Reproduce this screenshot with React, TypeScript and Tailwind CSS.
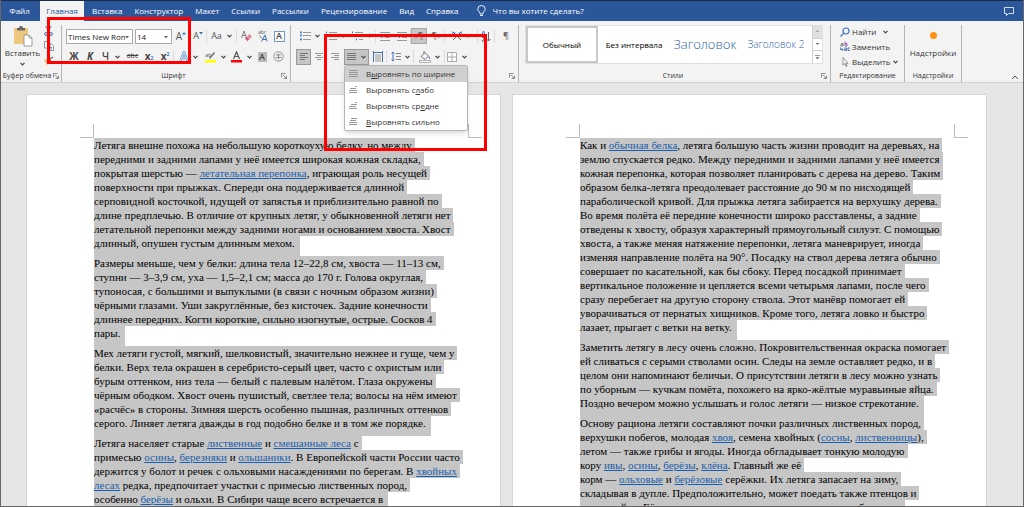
import type { ReactNode } from "react"
import clsx from "clsx"

const tabs = ["Вставка", "Конструктор", "Макет", "Ссылки", "Рассылки", "Рецензирование", "Вид", "Справка"]

function Link({ children }: { children: ReactNode }) {
  return (
    <a href="#" className="text-[#1a5fae] underline">
      {children}
    </a>
  )
}

const leftPage: ReactNode[][] = [
  [
    "Летяга внешне похожа на небольшую короткоухую белку, но между",
    "передними и задними лапами у неё имеется широкая кожная складка,",
    <>покрытая шерстью — <Link>летательная перепонка</Link>, играющая роль несущей</>,
    "поверхности при прыжках. Спереди она поддерживается длинной",
    "серповидной косточкой, идущей от запястья и приблизительно равной по",
    "длине предплечью. В отличие от крупных летяг, у обыкновенной летяги нет",
    "летательной перепонки между задними ногами и основанием хвоста. Хвост",
    "длинный, опушен густым длинным мехом.",
  ],
  [
    "Размеры меньше, чем у белки: длина тела 12–22,8 см, хвоста — 11–13 см,",
    "ступни — 3–3,9 см, уха — 1,5–2,1 см; масса до 170 г. Голова округлая,",
    "тупоносая, с большими и выпуклыми (в связи с ночным образом жизни)",
    "чёрными глазами. Уши закруглённые, без кисточек. Задние конечности",
    "длиннее передних. Когти короткие, сильно изогнутые, острые. Сосков 4",
    "пары.",
  ],
  [
    "Мех летяги густой, мягкий, шелковистый, значительно нежнее и гуще, чем у",
    "белки. Верх тела окрашен в серебристо-серый цвет, часто с охристым или",
    "бурым оттенком, низ тела — белый с палевым налётом. Глаза окружены",
    "чёрным ободком. Хвост очень пушистый, светлее тела; волосы на нём имеют",
    "«расчёс» в стороны. Зимняя шерсть особенно пышная, различных оттенков",
    "серого. Линяет летяга дважды в год подобно белке и в том же порядке.",
  ],
  [
    <>Летяга населяет старые <Link>лиственные</Link> и <Link>смешанные леса</Link> с</>,
    <>примесью <Link>осины</Link>, <Link>березняки</Link> и <Link>ольшаники</Link>. В Европейской части России часто</>,
    <>держится у болот и речек с ольховыми насаждениями по берегам. В <Link>хвойных</Link></>,
    <><Link>лесах</Link> редка, предпочитает участки с примесью лиственных пород,</>,
    <>особенно <Link>берёзы</Link> и ольхи. В Сибири чаще всего встречается в</>,
  ],
]

const rightPage: ReactNode[][] = [
  [
    <>Как и <Link>обычная белка</Link>, летяга большую часть жизни проводит на деревьях, на</>,
    "землю спускается редко. Между передними и задними лапами у неё имеется",
    "кожная перепонка, которая позволяет планировать с дерева на дерево. Таким",
    "образом белка-летяга преодолевает расстояние до 90 м по нисходящей",
    "параболической кривой. Для прыжка летяга забирается на верхушку дерева.",
    "Во время полёта её передние конечности широко расставлены, а задние",
    "отведены к хвосту, образуя характерный прямоугольный силуэт. С помощью",
    "хвоста, а также меняя натяжение перепонки, летяга маневрирует, иногда",
    "изменяя направление полёта на 90°. Посадку на ствол дерева летяга обычно",
    "совершает по касательной, как бы сбоку. Перед посадкой принимает",
    "вертикальное положение и цепляется всеми четырьмя лапами, после чего",
    "сразу перебегает на другую сторону ствола. Этот манёвр помогает ей",
    "уворачиваться от пернатых хищников. Кроме того, летяга ловко и быстро",
    "лазает, прыгает с ветки на ветку.",
  ],
  [
    "Заметить летягу в лесу очень сложно. Покровительственная окраска помогает",
    "ей сливаться с серыми стволами осин. Следы на земле оставляет редко, и в",
    "целом они напоминают беличьи. О присутствии летяги в лесу можно узнать",
    "по уборным — кучкам помёта, похожего на ярко-жёлтые муравьиные яйца.",
    "Поздно вечером можно услышать и голос летяги — низкое стрекотание.",
  ],
  [
    "Основу рациона летяги составляют почки различных лиственных пород,",
    <>верхушки побегов, молодая <Link>хвоя</Link>, семена хвойных (<Link>сосны</Link>, <Link>лиственницы</Link>),</>,
    "летом — также грибы и ягоды. Иногда обгладывает тонкую молодую",
    <>кору <Link>ивы</Link>, <Link>осины</Link>, <Link>берёзы</Link>, <Link>клёна</Link>. Главный же её</>,
    <>корм — <Link>ольховые</Link> и <Link>берёзовые</Link> серёжки. Их летяга запасает на зиму,</>,
    "складывая в дупле. Предположительно, может поедать также птенцов и",
    "птичьи яйца. Её рацион варьирует в зависимости от местообитания.",
  ],
]

function Page({ paragraphs }: { paragraphs: ReactNode[][] }) {
  return (
    <article className="min-w-0 flex-1 overflow-hidden border border-b-0 border-[#d6d6d6] bg-white pt-[29px]">
      {/* margin corners */}
      <div className="flex h-[14px] justify-between pr-[18px] pl-[53px]">
        <span className="w-[14px] border-r border-b border-[#bdbdbd]" />
        <span className="w-[14px] border-b border-l border-[#bdbdbd]" />
      </div>
      <div className="pl-[67px] font-['Liberation_Serif',serif] text-[11px] leading-[14px] whitespace-pre text-black">
        {paragraphs.map((lines, p) => (
          <p key={p}>
            {lines.map((line, i) => {
              const last = i === lines.length - 1
              return (
                <span key={i} className={clsx("block w-fit bg-[#c6c6c6]", last ? "pr-[5px] pb-[6px]" : "pr-[3px]")}>
                  {line}
                </span>
              )
            })}
          </p>
        ))}
      </div>
    </article>
  )
}

function Chevron() {
  return (
    <svg width="5" height="4" viewBox="0 0 5 4" className="shrink-0" fill="none" stroke="#444" strokeWidth="1.200">
      <path d="M.5 .8 2.5 2.8 4.5 .8" />
    </svg>
  )
}

function Caret() {
  return (
    <svg width="4" height="3" viewBox="0 0 4 3" className="pointer-events-none absolute top-[6px] right-[3px]" fill="#666">
      <path d="M0 0h4L2 2.5z" />
    </svg>
  )
}

function Launcher() {
  return (
    <button aria-label="Параметры" className="shrink-0">
      <svg width="6" height="6" viewBox="0 0 6 6" fill="none" stroke="#666" strokeWidth=".8">
        <path d="M.4 4.5V.4h4.2M2 2l3.4 3.4M5.6 2.6v3H2.6" />
      </svg>
    </button>
  )
}

function Divider() {
  return <span className="h-[13px] w-px shrink-0 bg-[#dcdcdc]" />
}

function Tool({ label, className, children }: { label: string; className: string; children: ReactNode }) {
  return (
    <button aria-label={label} className={clsx("flex h-4 shrink-0 items-center justify-center", className)}>
      {children}
    </button>
  )
}

// horizontal bars icon, each bar is [x, y, width]
function Bars({ bars, color = "#999" }: { bars: number[][]; color?: string }) {
  return (
    <svg width="10" height="10" viewBox="0 0 10 10" fill={color} className="shrink-0">
      {bars.map(([x, y, w]) => (
        <rect key={`${x}-${y}`} x={x} y={y} width={w} height="1" />
      ))}
    </svg>
  )
}

function ListIcon({ kind }: { kind: "bullets" | "numbers" | "levels" }) {
  const shift = kind === "levels" ? [0, 2, 4] : [0, 0, 0]
  return (
    <svg width="11" height="10" viewBox="0 0 11 10" className="shrink-0">
      {[1, 4, 8].map((y, i) => (
        <g key={y}>
          <rect x={shift[i]} y={y - 0.5} width={kind === "bullets" ? 1.8 : 1} height="1.8" fill="#3f73b5" />
          <rect x={3 + shift[i]} y={y} width={8 - shift[i]} height="1" fill="#999" />
        </g>
      ))}
    </svg>
  )
}

function IndentIcon({ back }: { back?: boolean }) {
  return (
    <svg width="10" height="9" viewBox="0 0 10 9" className="shrink-0" fill="none" stroke="#999">
      <path d="M0 .5h10M5 3.5h5M5 5.5h5M0 8.5h10" />
      <path d={back ? "M4 4.5H.5M2 3 .5 4.5 2 6" : "M0 4.5h3.5M2 3l1.5 1.5L2 6"} stroke="#3f73b5" strokeWidth=".9" />
    </svg>
  )
}

function Group({ title, launcher, className, children }: { title?: string; launcher?: boolean; className: string; children: ReactNode }) {
  return (
    <section className={clsx("flex flex-col border-r border-[#b4b4b4]", className)}>
      <div className="h-[46px]">{children}</div>
      <div className="flex h-3 items-center text-[7px] leading-3 text-[#333]">
        <span className="flex-1 text-center whitespace-nowrap">{title}</span>
        {launcher && <Launcher />}
      </div>
    </section>
  )
}

function ClipboardGroup() {
  return (
    <Group title="Буфер обмена" launcher className="w-[61px] pr-[2px]">
      <div className="flex">
        <button className="flex w-[43px] flex-col items-center text-[8px] leading-[10px] text-[#333]">
          <svg width="20" height="22" viewBox="0 0 20 22">
            <path d="M1 3h14v16H1z" fill="#edc87e" />
            <path d="M4 3h2a2 2 0 0 1 4 0h2v2.500H4z" fill="#666" />
            <path d="M11 10h5l3 3v8h-8z" fill="#fff" stroke="#888" strokeWidth=".8" />
            <path d="M16 10v3h3" fill="none" stroke="#888" strokeWidth=".8" />
          </svg>
          <span className="pt-px">Вставить</span>
          <span className="flex h-2 items-end"><Chevron /></span>
        </button>
        <div className="flex flex-col gap-[5px] pt-px">
          <button aria-label="Вырезать">
            <svg width="9" height="10" viewBox="0 0 9 10" fill="none" stroke="#777" strokeWidth="1">
              <path d="M1.5 0 6 7M7.500 0 3 7" />
              <circle cx="2" cy="8" r="1.400" stroke="#3f73b5" />
              <circle cx="7" cy="8" r="1.400" stroke="#3f73b5" />
            </svg>
          </button>
          <button aria-label="Копировать">
            <svg width="10" height="10" viewBox="0 0 10 10" fill="#fff" stroke="#888" strokeWidth=".9">
              <path d="M.5.5h4l1.500 1.500v5H.5zM4 3h3.500L9.500 5v4.500H4z" />
              <path d="M5 6.500h3M5 8h3" stroke="#3f73b5" />
            </svg>
          </button>
          <button aria-label="Формат по образцу">
            <svg width="10" height="9" viewBox="0 0 10 9">
              <path d="M0 4l4-1 2 3-3 3z" fill="#edb35a" />
              <path d="M5 3.500 9 1M5 3l2.500 3" stroke="#666" strokeWidth="1.200" />
            </svg>
          </button>
        </div>
      </div>
    </Group>
  )
}

function FontGroup() {
  return (
    <Group title="Шрифт" launcher className="w-[229px] pr-[3px] pl-1">
      <div className="flex h-[21px] items-center pt-px">
        <div className="relative mr-[2px] h-[15px] w-[67px] border border-[#ababab] bg-white">
          <select aria-label="Шрифт" className="block h-[13px] w-[58px] appearance-none overflow-hidden pl-px text-[8px] leading-[13px] text-[#222]">
            <option>Times New Roman</option>
          </select>
          <Caret />
        </div>
        <div className="relative h-[15px] w-[37px] border border-[#ababab] bg-white">
          <select aria-label="Размер шрифта" className="block h-[13px] w-[28px] appearance-none pl-px text-[8px] leading-[13px] text-[#222]">
            <option>14</option>
          </select>
          <Caret />
        </div>
        <Tool label="Увеличить размер" className="w-[18px] text-[10px] text-[#555]">
          A<svg width="4" height="8" viewBox="0 0 4 8" fill="#3f73b5"><path d="M0 2.500 2 0l2 2.500z" /></svg>
        </Tool>
        <Tool label="Уменьшить размер" className="w-4 text-[9px] text-[#555]">
          A<svg width="4" height="8" viewBox="0 0 4 8" fill="#3f73b5"><path d="M0 0h4L2 2.500z" /></svg>
        </Tool>
        <Divider />
        <Tool label="Регистр" className="w-[29px] gap-[5px] text-[9px] text-[#555]">
          Aa<Chevron />
        </Tool>
        <Divider />
        <Tool label="Очистить формат" className="w-[18px]">
          <svg width="11" height="12" viewBox="0 0 11 12">
            <path d="M.5 8 3 1l2.500 7M1.400 5.500h3.200" fill="none" stroke="#777" strokeWidth=".9" />
            <path d="M4 8.500 8.500 4 11 6.500 6.500 11z" fill="#e68a9e" />
            <path d="M4 8.500 5.500 7 8 9.500 6.500 11z" fill="#c75b78" />
          </svg>
        </Tool>
        <Tool label="Фонетика" className="w-4">
          <svg width="10" height="12" viewBox="0 0 10 12" fontSize="5">
            <text x="0" y="4" fill="#555">abc</text>
            <path d="M3.500 11.500 7 5l2 6.500M5 9.500h3" fill="none" stroke="#3f73b5" />
            <path d="M1.500 5.500 4 8.500" stroke="#777" />
          </svg>
        </Tool>
        <Tool label="Граница знаков" className="w-4">
          <span className="flex size-[11px] items-center justify-center border border-[#6f9ccf] bg-white text-[9px] font-semibold text-[#444]">A</span>
        </Tool>
      </div>
      <div className="flex h-[21px] items-center text-[10px] text-[#444]">
        <Tool label="Полужирный" className="w-4 font-bold">Ж</Tool>
        <Tool label="Курсив" className="w-4 font-bold italic">К</Tool>
        <Tool label="Подчеркнутый" className="w-[26px] gap-[6px] font-semibold"><span className="underline">Ч</span><Chevron /></Tool>
        <Tool label="Зачеркнутый" className="w-[17px] text-[7px]"><s>abc</s></Tool>
        <Tool label="Подстрочный" className="w-4 font-bold">x<sub className="text-[5px] text-[#3f73b5]">2</sub></Tool>
        <Tool label="Надстрочный" className="w-4 font-bold">x<sup className="text-[5px] text-[#3f73b5]">2</sup></Tool>
        <Divider />
        <Tool label="Эффекты" className="w-[28px] gap-[4px]">
          <svg width="10" height="11" viewBox="0 0 9 11" fill="none" strokeLinejoin="round">
            <path d="M1 10 4.500 1 8 10M2.500 7h4" stroke="#5b93d0" strokeWidth="2.400" />
            <path d="M1 10 4.500 1 8 10M2.500 7h4" stroke="#fff" strokeWidth=".8" />
          </svg>
          <Chevron />
        </Tool>
        <Tool label="Цвет выделения" className="w-[26px] gap-[5px]">
          <svg width="11" height="12" viewBox="0 0 11 12">
            <text x="0" y="6" fontSize="6" fill="#555">ab</text>
            <path d="M4.500 7.500 9.500 1.500" stroke="#777" strokeWidth="1.500" />
            <path d="M0 9h11v2.500H0z" fill="#ff0" />
          </svg>
          <Chevron />
        </Tool>
        <Tool label="Цвет текста" className="w-[26px] gap-[5px]">
          <svg width="11" height="12" viewBox="0 0 11 12">
            <path d="M2.500 8 5.500.8 8.500 8M3.500 5.500h4" fill="none" stroke="#555" strokeWidth="1.200" />
            <path d="M0 9h11v2.500H0z" fill="#f00" />
          </svg>
          <Chevron />
        </Tool>
        <Tool label="Затенение знаков" className="w-4"><span className="flex h-[10px] w-[9px] items-center justify-center bg-[#bbb] text-[9px] font-semibold">A</span></Tool>
        <Tool label="Обводка знаков" className="w-4">
          <svg width="11" height="11" viewBox="0 0 11 11" fill="none" stroke="#777" strokeWidth=".8">
            <circle cx="5.500" cy="5.500" r="4.700" />
            <path d="M3 4h5M2.500 6.500h6M5.500 2.500v6" />
          </svg>
        </Tool>
      </div>
    </Group>
  )
}

const alignOptions = [
  { before: "В", key: "ы", after: "ровнять по ширине", bars: [[0, 1, 9], [0, 3, 9], [0, 5, 9], [0, 7, 9]] },
  { before: "Выровнять с", key: "л", after: "або", bars: [[6, 1, 2], [1, 3, 6], [0, 5, 8], [0, 7, 8]] },
  { before: "Выровнять ср", key: "е", after: "дне", bars: [[6, 1, 2], [2, 3, 6], [0, 5, 7], [0, 7, 8]] },
  { before: "", key: "В", after: "ыровнять сильно", bars: [[2, 1, 6], [1, 3, 6], [0, 5, 8], [0, 7, 8]] },
]

function AlignMenu() {
  return (
    <div role="menu" className="absolute top-4 left-0 z-20 w-[124px] rounded-[2px] border border-[#b5b5b5] bg-white shadow-md">
      {alignOptions.map((option, i) => (
        <button
          key={option.key + i}
          role="menuitem"
          className={clsx("flex h-4 w-full items-center gap-[7px] pl-1 text-[8px] whitespace-nowrap text-[#333]", i === 0 && "bg-[#cfcfcf]")}
        >
          <Bars bars={option.bars} />
          <span>
            {option.before}
            <u>{option.key}</u>
            {option.after}
          </span>
        </button>
      ))}
    </div>
  )
}

function ParagraphGroup() {
  return (
    <Group launcher className="w-[228px] pr-[3px] pl-[5px]">
      <div className="flex h-[21px] items-center pt-px">
        <Tool label="Маркеры" className="w-[27px] gap-[4px]"><ListIcon kind="bullets" /><Chevron /></Tool>
        <Tool label="Нумерация" className="w-[26px] gap-[4px]"><ListIcon kind="numbers" /><Chevron /></Tool>
        <Tool label="Многоуровневый список" className="w-[26px] gap-[4px]"><ListIcon kind="levels" /><Chevron /></Tool>
        <Divider />
        <Tool label="Уменьшить отступ" className="w-[18px]"><IndentIcon back /></Tool>
        <Tool label="Увеличить отступ" className="w-4"><IndentIcon /></Tool>
        <Divider />
        <Tool label="Слева направо" className="w-4 border border-[#aaa] bg-[#c6c6c6] text-[9px] text-[#666]"><span className="text-[#3f73b5]">›</span>¶</Tool>
        <Tool label="Справа налево" className="w-[17px] text-[9px] text-[#666]">¶<span className="text-[#3f73b5]">‹</span></Tool>
        <Divider />
        <Tool label="Азиатская верстка" className="w-[32px] gap-[4px]">
          <svg width="10" height="10" viewBox="0 0 10 10" fill="none">
            <path d="M1 9 5 5l4 4M5 5 1.500 1.500M5 5l3.500-3.500" stroke="#666" />
            <path d="M0 0v4M10 0v4M.5 2h3M9.500 2h-3" stroke="#3f73b5" />
          </svg>
          <Chevron />
        </Tool>
        <Divider />
        <Tool label="Сортировка" className="w-4">
          <svg width="10" height="12" viewBox="0 0 10 12" fill="none">
            <path d="M.5 6 2.500 1l2 5M1 4.500h3" stroke="#3f73b5" />
            <path d="M1 7.500h3L1 11h3" stroke="#666" />
            <path d="M7.500 2v9M5.500 9l2 2 2-2" stroke="#666" />
          </svg>
        </Tool>
        <Divider />
        <Tool label="Отобразить все знаки" className="w-[22px] text-[9px] text-[#666]">¶</Tool>
      </div>
      <div className="flex h-[21px] items-center">
        <Tool label="По левому краю" className="w-[15px] border border-[#999] bg-[#c6c6c6]"><Bars bars={[[1, 1, 8], [1, 3, 5], [1, 5, 8], [1, 7, 5]]} color="#777" /></Tool>
        <Tool label="По центру" className="w-4"><Bars bars={[[1, 1, 8], [3, 3, 4], [1, 5, 8], [3, 7, 4]]} /></Tool>
        <Tool label="По правому краю" className="w-4"><Bars bars={[[1, 1, 8], [4, 3, 5], [1, 5, 8], [4, 7, 5]]} /></Tool>
        <div className="relative ml-px">
          <Tool label="По ширине" className="w-[25px] gap-[4px] border border-[#999] bg-[#c6c6c6]">
            <Bars bars={[[0, 1, 9], [0, 3, 9], [0, 5, 9], [0, 7, 9]]} color="#777" /><Chevron />
          </Tool>
          <AlignMenu />
        </div>
        <Tool label="Распределить" className="w-[17px]">
          <svg width="10" height="11" viewBox="0 0 10 11">
            <path d="M.5 0v11M9.500 0v11M1 1.500h8" stroke="#3f73b5" />
            <path d="M2 4h6M2 6h6M2 8h6M2 10h6" stroke="#999" />
          </svg>
        </Tool>
        <Divider />
        <Tool label="Интервал" className="w-[26px] gap-[4px]">
          <svg width="10" height="11" viewBox="0 0 10 11" fill="none">
            <path d="M2 1v9M.5 2.500 2 1l1.500 1.500M.5 8.500 2 10l1.500-1.500" stroke="#3f73b5" />
            <path d="M5 2.500h5M5 5.500h5M5 8.500h5" stroke="#888" />
          </svg>
          <Chevron />
        </Tool>
        <Divider />
        <Tool label="Заливка" className="w-[30px] gap-[4px]">
          <svg width="12" height="12" viewBox="0 0 12 12" fill="none">
            <path d="M2 5.500 6 1.500 9.500 5 6 8.500zM5 0v3" stroke="#777" />
            <path d="M10 5c1.500 2 1 3 .5 3s-1-1-.5-3z" fill="#3f73b5" />
            <rect x=".5" y="9.500" width="11" height="2" fill="#fff" stroke="#999" strokeWidth=".7" />
          </svg>
          <Chevron />
        </Tool>
        <Divider />
        <Tool label="Границы" className="w-[24px] gap-[5px]">
          <svg width="10" height="10" viewBox="0 0 10 10" fill="#fff" stroke="#aaa">
            <path d="M.5.5h9v9h-9zM5 .5v9M.5 5h9" />
          </svg>
          <Chevron />
        </Tool>
      </div>
    </Group>
  )
}

function StylesGroup() {
  return (
    <Group title="Стили" launcher className="min-w-0 flex-1 pr-[3px] pl-[6px]">
      <div className="mr-1 flex h-[39px] border border-[#e0e0e0] bg-white whitespace-nowrap">
        <button className="w-[72px] border-2 border-[#c8c9c4] text-[8px] font-medium text-black">Обычный</button>
        <button className="w-[72px] text-[8px] font-medium text-black">Без интервала</button>
        <button className="w-[70px] text-[13px] font-light text-[#2f5fa6]">Заголовок</button>
        <button className="flex-1 text-[10px] font-light text-[#2f5fa6]">Заголовок 2</button>
        <div className="flex w-[10px] flex-col border-l border-[#d0d0d0]">
          {["Вверх", "Вниз", "Ещё"].map((name, i) => (
            <button key={name} aria-label={name} className={clsx("flex flex-1 items-center justify-center", i === 0 ? "bg-[#e1e1e1]" : "border-t border-[#d0d0d0]")}>
              <svg width="5" height="5" viewBox="0 0 5 5" fill={i === 0 ? "#aaa" : "#777"}>
                <path d={i === 0 ? "M.5 3h4l-2-2z" : i === 1 ? "M.5 1h4l-2 2z" : "M.5 2h4l-2 2.500zM0 0h5v.8H0z"} />
              </svg>
            </button>
          ))}
        </div>
      </div>
    </Group>
  )
}

function EditGroup() {
  return (
    <Group title="Редактирование" className="w-[74px]">
      <div className="flex flex-col gap-[2px] pl-[9px] text-[8px] text-[#333]">
        <button className="flex h-[13px] items-center gap-[2px]">
          <svg width="10" height="10" viewBox="0 0 10 10" fill="none" stroke="#3f73b5" strokeWidth="1.200">
            <circle cx="6" cy="4" r="3" />
            <path d="M3.800 6.200.5 9.500" />
          </svg>
          Найти
          <span className="pl-[5px]"><Chevron /></span>
        </button>
        <button className="flex h-[13px] items-center gap-[2px]">
          <svg width="10" height="11" viewBox="0 0 10 11" fill="none" strokeWidth=".9">
            <path d="M1 2.500h2v2.500H1.200a.7.7 0 0 1 0-1.400H3" stroke="#777" />
            <path d="M5 .5v4.500h2V2.500H5" stroke="#8a4fa5" />
            <path d="M4.500 7h2v2.500H4.700a.7.7 0 0 1 0-1.300h1.800M9.800 7H8v2.500h1.800M.5 6.500v2h2.500M2 7.300l1.200 1.200L2 9.700" stroke="#3f73b5" />
          </svg>
          Заменить
        </button>
        <button className="flex h-[13px] items-center gap-[2px]">
          <svg width="10" height="10" viewBox="0 0 10 10" fill="#fff" stroke="#777" strokeWidth=".8">
            <path d="M3 .5v7.500L4.800 6.500l1.200 3 1-.5-1.200-2.700H8z" />
          </svg>
          Выделить
          <Chevron />
        </button>
      </div>
    </Group>
  )
}

export default function App() {
  return (
    <div className="relative flex h-screen flex-col overflow-hidden border-x border-b border-[#666] bg-[#e6e6e6] font-['Open_Sans',sans-serif]">
      <nav className="flex h-[21px] shrink-0 items-stretch gap-[2px] border-t border-[#1a2b4a] bg-[#2b579a] text-[8px] whitespace-nowrap text-white">
        <button className="w-[37px]">Файл</button>
        <button className="mr-px w-[44px] bg-[#f3f3f3] text-[#2b579a]">Главная</button>
        {tabs.map((tab) => (
          <button key={tab} className="px-[5px]">{tab}</button>
        ))}
        <label className="flex items-center gap-[7px] pl-[11px]">
          <svg width="9" height="12" viewBox="0 0 9 12" fill="none" stroke="#fff" strokeWidth=".9">
            <path d="M3 9V7.500C1.500 6.500.8 5.500.8 4.200a3.700 3.700 0 0 1 7.400 0C8.200 5.500 7.500 6.500 6 7.500V9zM3 10.500h3" />
          </svg>
          <input aria-label="Поиск команд" className="w-[120px] bg-transparent placeholder:text-white" placeholder="Что вы хотите сделать?" />
        </label>
        <button aria-label="Примечания" className="ml-auto pr-[9px]">
          <svg width="10" height="9" viewBox="0 0 10 9" fill="none" stroke="#fff" strokeWidth=".8">
            <path d="M.5.5h9v6h-5l-2 2v-2h-2z" />
          </svg>
        </button>
      </nav>

      <div className="flex h-[62px] shrink-0 border-b border-[#d2d2d2] bg-[#f3f3f3] pt-[4px]">
        <div className="flex h-[57px] min-w-0 flex-1">
          <ClipboardGroup />
          <FontGroup />
          <ParagraphGroup />
          <StylesGroup />
          <EditGroup />
          <Group title="Надстройки" className="w-[57px]">
            <button className="flex w-full flex-col items-center gap-[8px] pt-[7px] text-[8px] text-[#333]">
              <span className="size-[7px] rounded-full bg-[#ff9212]" />
              Надстройки
            </button>
          </Group>
          <div className="flex w-[61px] items-end justify-end pr-1 pb-[2px]">
            <button aria-label="Свернуть ленту">
              <svg width="8" height="5" viewBox="0 0 8 5" fill="none" stroke="#555"><path d="M1 4l3-3 3 3" /></svg>
            </button>
          </div>
        </div>
      </div>

      <main className="flex min-h-0 flex-1 gap-[11px] pt-[11px] pr-9 pl-[25px]">
        <Page paragraphs={leftPage} />
        <Page paragraphs={rightPage} />
      </main>

      {/* red callouts over the ribbon */}
      <div className="pointer-events-none absolute top-[17px] left-[46px] z-30 h-[47px] w-[144px] border-3 border-[#f00]" />
      <div className="pointer-events-none absolute top-[34px] left-[323px] z-30 h-[117px] w-[163px] border-3 border-[#f00]" />
    </div>
  )
}
